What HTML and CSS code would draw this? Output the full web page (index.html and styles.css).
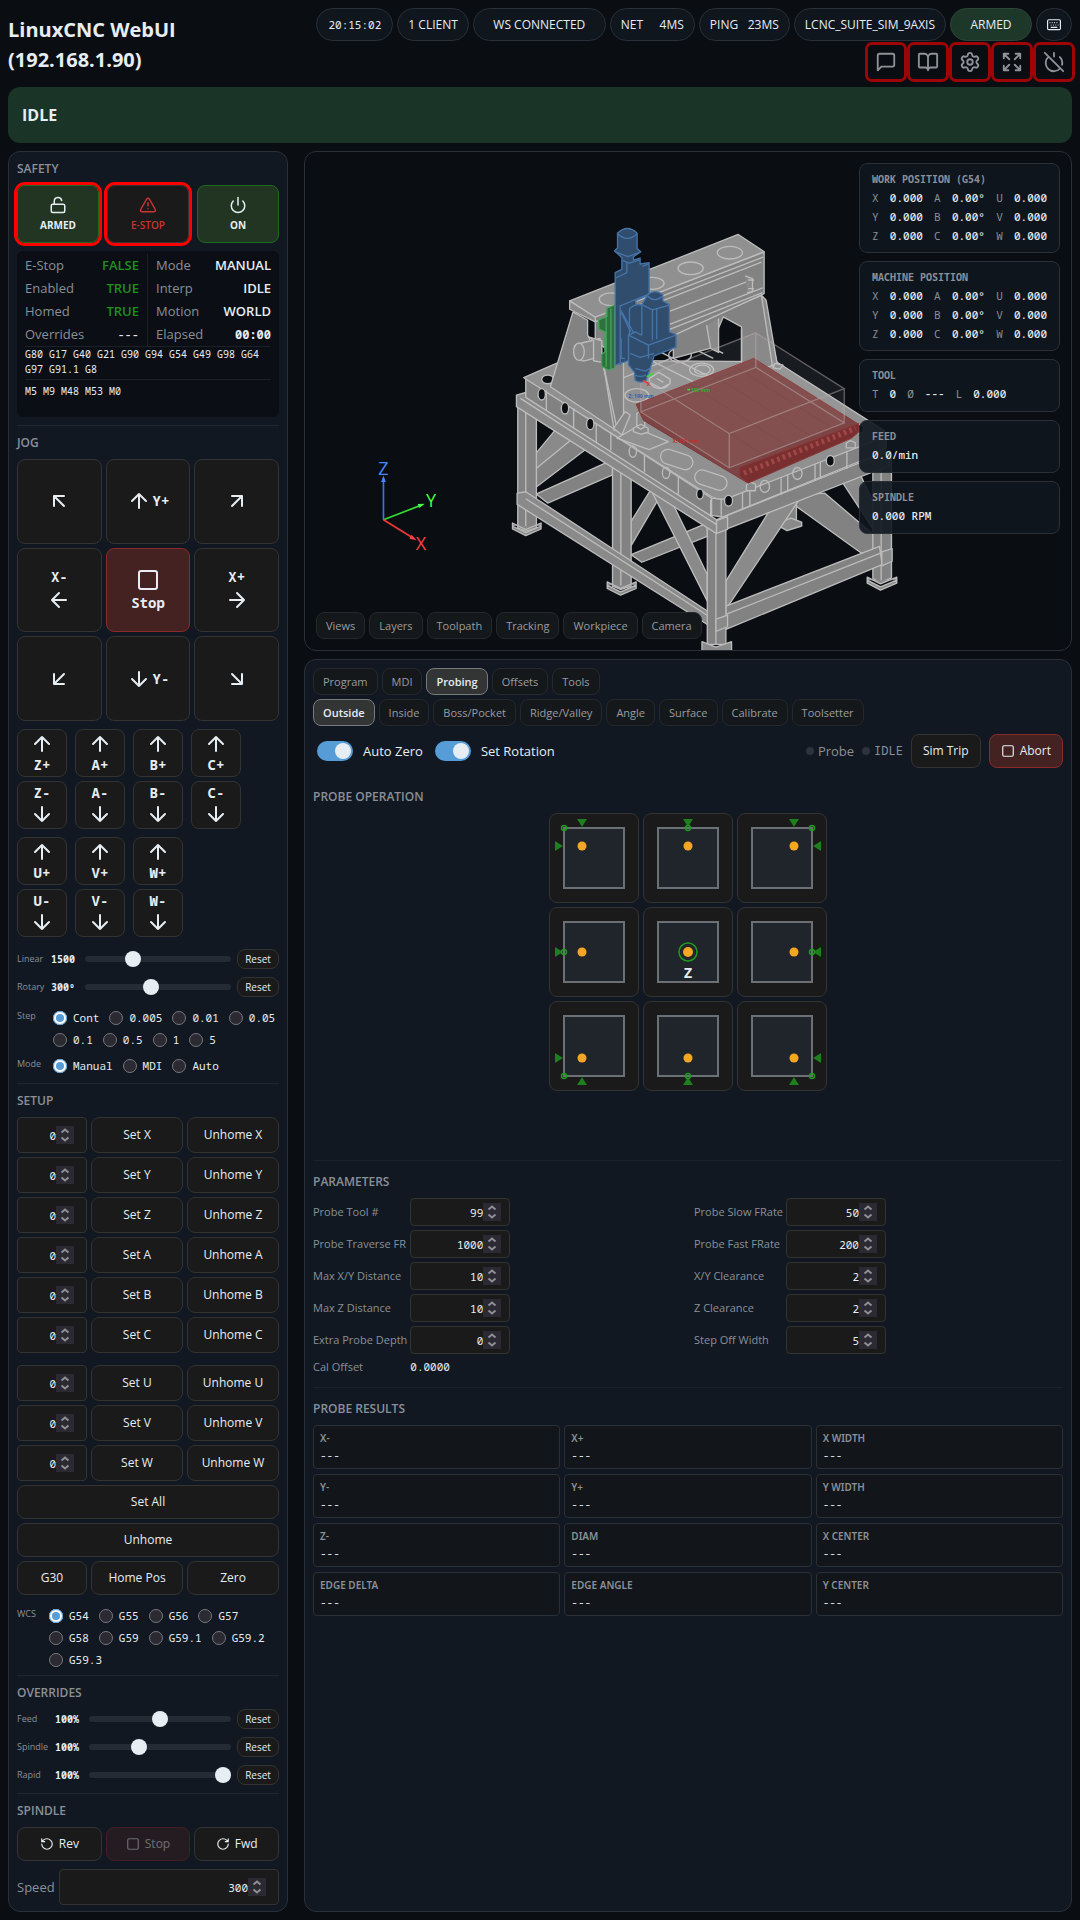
FILE: index.html
```html
<!DOCTYPE html>
<html lang="en">
<head>
<meta charset="utf-8">
<meta name="viewport" content="width=device-width, initial-scale=1">
<title>LinuxCNC WebUI (192.168.1.90)</title>
<link rel="stylesheet" href="styles.css">
</head>
<body>
<svg class="defs" aria-hidden="true">
  <symbol id="spin" viewBox="0 0 18 18"><path d="M5.500 6.500 9 3.500l3.500 3M5.500 11.500l3.500 3 3.500-3"/></symbol>
  <symbol id="up" viewBox="0 0 24 24"><path d="m5 12 7-7 7 7M12 19V5"/></symbol>
  <symbol id="down" viewBox="0 0 24 24"><path d="M12 5v14m7-7-7 7-7-7"/></symbol>
  <symbol id="left" viewBox="0 0 24 24"><path d="m12 19-7-7 7-7M19 12H5"/></symbol>
  <symbol id="right" viewBox="0 0 24 24"><path d="M5 12h14m-7-7 7 7-7 7"/></symbol>
  <symbol id="nw" viewBox="0 0 24 24"><path d="M7 17V7h10M17 17 7 7"/></symbol>
  <symbol id="ne" viewBox="0 0 24 24"><path d="M7 7h10v10M7 17 17 7"/></symbol>
  <symbol id="sw" viewBox="0 0 24 24"><path d="M17 7 7 17M17 17H7V7"/></symbol>
  <symbol id="se" viewBox="0 0 24 24"><path d="m7 7 10 10M17 7v10H7"/></symbol>
  <symbol id="square" viewBox="0 0 24 24"><rect x="3" y="3" width="18" height="18" rx="2"/></symbol>
  <symbol id="part" viewBox="0 0 90 90"><rect class="stock" x="15" y="15" width="60" height="60"/></symbol>
</svg>

<header class="top">
  <h1>LinuxCNC WebUI (192.168.1.90)</h1>
  <div class="top-right">
    <div class="pills">
      <span class="pill clock mono">20:15:02</span>
      <span class="pill">1 CLIENT</span>
      <span class="pill ws">WS CONNECTED</span>
      <span class="pill net"><span>NET</span><span>4MS</span></span>
      <span class="pill ping"><span>PING</span><span>23MS</span></span>
      <span class="pill suite">LCNC_SUITE_SIM_9AXIS</span>
      <span class="pill armed">ARMED</span>
      <button class="pill kbd" aria-label="Keyboard"><svg class="icon s14" viewBox="0 0 24 24"><rect x="1" y="3" width="22" height="17" rx="2"/><path d="M5 8h.01M9 8h.01M13 8h.01M17 8h.01M7 12h.01M11 12h.01M15 12h.01M19 12h.01M7 16h10"/></svg></button>
    </div>
    <div class="tools">
      <button class="tool" aria-label="Messages"><svg class="icon s22" viewBox="0 0 24 24"><path d="M21 15a2 2 0 0 1-2 2H7l-4 4V5a2 2 0 0 1 2-2h14a2 2 0 0 1 2 2z"/></svg></button>
      <button class="tool" aria-label="Manual"><svg class="icon s22" viewBox="0 0 24 24"><path d="M12 7v14M3 18a1 1 0 0 1-1-1V4a1 1 0 0 1 1-1h5a4 4 0 0 1 4 4 4 4 0 0 1 4-4h5a1 1 0 0 1 1 1v13a1 1 0 0 1-1 1h-6a3 3 0 0 0-3 3 3 3 0 0 0-3-3z"/></svg></button>
      <button class="tool" aria-label="Settings"><svg class="icon s22" viewBox="0 0 24 24"><path d="M9.671 4.136a2.340 2.340 0 0 1 4.659 0 2.340 2.340 0 0 0 3.319 1.915 2.340 2.340 0 0 1 2.330 4.033 2.340 2.340 0 0 0 0 3.831 2.340 2.340 0 0 1-2.330 4.033 2.340 2.340 0 0 0-3.319 1.915 2.340 2.340 0 0 1-4.659 0 2.340 2.340 0 0 0-3.320-1.915 2.340 2.340 0 0 1-2.330-4.033 2.340 2.340 0 0 0 0-3.831A2.340 2.340 0 0 1 6.350 6.051a2.340 2.340 0 0 0 3.319-1.915"/><circle cx="12" cy="12" r="3"/></svg></button>
      <button class="tool" aria-label="Full screen"><svg class="icon s22" viewBox="0 0 24 24"><path d="m15 15 6 6M15 9l6-6M21 16v5h-5M21 8V3h-5M3 16v5h5M3 21l6-6M3 8V3h5M9 9 3 3"/></svg></button>
      <button class="tool" aria-label="Shut down"><svg class="icon s22" viewBox="0 0 24 24"><path d="M18.360 6.640A9 9 0 0 1 20.770 15M6.160 6.160a9 9 0 1 0 12.680 12.680M12 2v4M2 2l20 20"/></svg></button>
    </div>
  </div>
</header>

<div class="banner" role="status">IDLE</div>

<div class="layout">
<aside class="panel side">
  <section>
    <h2>SAFETY</h2>
    <div class="safety">
      <button class="safe on flag"><svg class="icon s18" viewBox="0 0 24 24"><rect x="3" y="11" width="18" height="11" rx="2"/><path d="M7 11V7a5 5 0 0 1 9.900-1"/></svg>ARMED</button>
      <button class="safe estop flag"><svg class="icon s18" viewBox="0 0 24 24"><path d="m21.730 18-8-14a2 2 0 0 0-3.480 0l-8 14A2 2 0 0 0 4 21h16a2 2 0 0 0 1.730-3M12 9v4M12 17h.01"/></svg>E-STOP</button>
      <button class="safe on"><svg class="icon s18" viewBox="0 0 24 24"><path d="M12 2v10M18.400 6.600a9 9 0 1 1-12.770.04"/></svg>ON</button>
    </div>
    <div class="status">
      <div class="status-cols">
        <dl>
          <dt>E-Stop</dt><dd class="good">FALSE</dd>
          <dt>Enabled</dt><dd class="good">TRUE</dd>
          <dt>Homed</dt><dd class="good">TRUE</dd>
          <dt>Overrides</dt><dd class="mono light">---</dd>
        </dl>
        <dl>
          <dt>Mode</dt><dd>MANUAL</dd>
          <dt>Interp</dt><dd>IDLE</dd>
          <dt>Motion</dt><dd>WORLD</dd>
          <dt>Elapsed</dt><dd class="mono">00:00</dd>
        </dl>
      </div>
      <p class="codes mono">G80 G17 G40 G21 G90 G94 G54 G49 G98 G64 G97 G91.1 G8</p>
      <p class="codes mcodes mono">M5 M9 M48 M53 M0</p>
    </div>
  </section>

  <section class="jog-section">
    <h2>JOG</h2>
    <div class="jog mono">
      <button aria-label="X- Y+"><svg class="icon s24"><use href="#nw"/></svg></button>
      <button><svg class="icon s24"><use href="#up"/></svg>Y+</button>
      <button aria-label="X+ Y+"><svg class="icon s24"><use href="#ne"/></svg></button>
      <button class="col">X-<svg class="icon s24"><use href="#left"/></svg></button>
      <button class="col stop"><svg class="icon s24"><use href="#square"/></svg>Stop</button>
      <button class="col">X+<svg class="icon s24"><use href="#right"/></svg></button>
      <button aria-label="X- Y-"><svg class="icon s24"><use href="#sw"/></svg></button>
      <button><svg class="icon s24"><use href="#down"/></svg>Y-</button>
      <button aria-label="X+ Y-"><svg class="icon s24"><use href="#se"/></svg></button>
    </div>
    <div class="axes mono">
      <button><svg class="icon s24"><use href="#up"/></svg>Z+</button>
      <button><svg class="icon s24"><use href="#up"/></svg>A+</button>
      <button><svg class="icon s24"><use href="#up"/></svg>B+</button>
      <button><svg class="icon s24"><use href="#up"/></svg>C+</button>
      <button>Z-<svg class="icon s24"><use href="#down"/></svg></button>
      <button>A-<svg class="icon s24"><use href="#down"/></svg></button>
      <button>B-<svg class="icon s24"><use href="#down"/></svg></button>
      <button>C-<svg class="icon s24"><use href="#down"/></svg></button>
    </div>
    <div class="axes three mono">
      <button><svg class="icon s24"><use href="#up"/></svg>U+</button>
      <button><svg class="icon s24"><use href="#up"/></svg>V+</button>
      <button><svg class="icon s24"><use href="#up"/></svg>W+</button>
      <button>U-<svg class="icon s24"><use href="#down"/></svg></button>
      <button>V-<svg class="icon s24"><use href="#down"/></svg></button>
      <button>W-<svg class="icon s24"><use href="#down"/></svg></button>
    </div>
    <div class="sliders jog-sliders">
      <div class="slide"><label for="lin">Linear</label><output class="mono" for="lin">1500</output><input id="lin" type="range" min="0" max="1000" value="308"><button class="reset">Reset</button></div>
      <div class="slide"><label for="rot">Rotary</label><output class="mono" for="rot">300º</output><input id="rot" type="range" min="0" max="1000" value="446"><button class="reset">Reset</button></div>
    </div>
    <div class="choice" role="radiogroup" aria-label="Step">
      <span class="cap">Step</span>
      <div class="opts mono">
        <label><input type="radio" name="step" checked>Cont</label>
        <label><input type="radio" name="step">0.005</label>
        <label><input type="radio" name="step">0.01</label>
        <label><input type="radio" name="step">0.05</label>
        <label><input type="radio" name="step">0.1</label>
        <label><input type="radio" name="step">0.5</label>
        <label><input type="radio" name="step">1</label>
        <label><input type="radio" name="step">5</label>
      </div>
    </div>
    <div class="choice" role="radiogroup" aria-label="Mode">
      <span class="cap">Mode</span>
      <div class="opts mono">
        <label><input type="radio" name="mode" checked>Manual</label>
        <label><input type="radio" name="mode">MDI</label>
        <label><input type="radio" name="mode">Auto</label>
      </div>
    </div>
  </section>

  <section class="setup-section">
    <h2>SETUP</h2>
    <div class="setup">
      <div class="num mono"><input type="number" value="0" aria-label="X value"><svg class="spin"><use href="#spin"/></svg></div><button class="btn">Set X</button><button class="btn">Unhome X</button>
      <div class="num mono"><input type="number" value="0" aria-label="Y value"><svg class="spin"><use href="#spin"/></svg></div><button class="btn">Set Y</button><button class="btn">Unhome Y</button>
      <div class="num mono"><input type="number" value="0" aria-label="Z value"><svg class="spin"><use href="#spin"/></svg></div><button class="btn">Set Z</button><button class="btn">Unhome Z</button>
      <div class="num mono"><input type="number" value="0" aria-label="A value"><svg class="spin"><use href="#spin"/></svg></div><button class="btn">Set A</button><button class="btn">Unhome A</button>
      <div class="num mono"><input type="number" value="0" aria-label="B value"><svg class="spin"><use href="#spin"/></svg></div><button class="btn">Set B</button><button class="btn">Unhome B</button>
      <div class="num mono"><input type="number" value="0" aria-label="C value"><svg class="spin"><use href="#spin"/></svg></div><button class="btn">Set C</button><button class="btn">Unhome C</button>
    </div>
    <div class="setup second">
      <div class="num mono"><input type="number" value="0" aria-label="U value"><svg class="spin"><use href="#spin"/></svg></div><button class="btn">Set U</button><button class="btn">Unhome U</button>
      <div class="num mono"><input type="number" value="0" aria-label="V value"><svg class="spin"><use href="#spin"/></svg></div><button class="btn">Set V</button><button class="btn">Unhome V</button>
      <div class="num mono"><input type="number" value="0" aria-label="W value"><svg class="spin"><use href="#spin"/></svg></div><button class="btn">Set W</button><button class="btn">Unhome W</button>
      <button class="btn wide">Set All</button>
      <button class="btn wide">Unhome</button>
      <button class="btn">G30</button><button class="btn">Home Pos</button><button class="btn">Zero</button>
    </div>
    <div class="choice wcs" role="radiogroup" aria-label="WCS">
      <span class="cap">WCS</span>
      <div class="opts mono">
        <label><input type="radio" name="wcs" checked>G54</label>
        <label><input type="radio" name="wcs">G55</label>
        <label><input type="radio" name="wcs">G56</label>
        <label><input type="radio" name="wcs">G57</label>
        <label><input type="radio" name="wcs">G58</label>
        <label><input type="radio" name="wcs">G59</label>
        <label><input type="radio" name="wcs">G59.1</label>
        <label><input type="radio" name="wcs">G59.2</label>
        <label><input type="radio" name="wcs">G59.3</label>
      </div>
    </div>
  </section>

  <section>
    <h2>OVERRIDES</h2>
    <div class="sliders over">
      <div class="slide"><label for="feed">Feed</label><output class="mono" for="feed">100%</output><input id="feed" type="range" min="0" max="200" value="100"><button class="reset">Reset</button></div>
      <div class="slide"><label for="spd">Spindle</label><output class="mono" for="spd">100%</output><input id="spd" type="range" min="0" max="300" value="100"><button class="reset">Reset</button></div>
      <div class="slide"><label for="rap">Rapid</label><output class="mono" for="rap">100%</output><input id="rap" type="range" min="0" max="100" value="100"><button class="reset">Reset</button></div>
    </div>
  </section>

  <section class="spindle-section">
    <h2>SPINDLE</h2>
    <div class="spindle">
      <button class="btn"><svg class="icon s14" viewBox="0 0 24 24"><path d="M3 12a9 9 0 1 0 9-9 9.750 9.750 0 0 0-6.740 2.740L3 8M3 3v5h5"/></svg>Rev</button>
      <button class="btn danger" disabled><svg class="icon s14"><use href="#square"/></svg>Stop</button>
      <button class="btn"><svg class="icon s14" viewBox="0 0 24 24"><path d="M21 12a9 9 0 1 1-9-9c2.520 0 4.930 1 6.740 2.740L21 8M21 3v5h-5"/></svg>Fwd</button>
    </div>
    <div class="speed"><label for="speed">Speed</label><div class="num mono"><input id="speed" type="number" value="300"><svg class="spin"><use href="#spin"/></svg></div></div>
  </section>
</aside>

<main>
  <section class="view" aria-label="Machine view">
    <svg class="scene" viewBox="12 18 2304 1500" preserveAspectRatio="xMidYMid slice" aria-hidden="true">
      <g class="steel">
        <!-- rear legs and braces -->
        <path class="dk" d="M1455 1060h35v70h-35z"/>
        <path d="M1440 1135l33-15 33 12v12l-44 14-22-12z"/>
        <path class="dk" d="M707 1048 937 945v45l-195 85z"/>
        <path d="M678 960 765 855l55 30-142 125z"/>
        <path class="dk" d="M678 995 812 885l45 28-169 129-10 3z"/>
        <path class="dk" d="M993 1230 1222 1135v40l-197 78z"/>
        <path d="M993 1130 1050 1038l28 20-85 145z"/>
        <path class="dk" d="M1490 1050 1575 1045 1740 1185v32l-55 8-195-140z"/>
        <path d="M1630 1015 1685 995l75 160-5 50z"/>
        <path d="M1055 1040 1115 1070 1222 1290v80z"/>
        <path d="M1278 1310 1420 1080l75-10-217 325z"/>
        <!-- legs -->
        <path class="dk" d="M652 760h56v390l-32 10-24-10z"/><path d="M676 770v385"/>
        <path d="M636 1135l40 20 46-20v18l-46 20-40-20zM636 1144l40 20 46-20"/>
        <path class="dk" d="M937 940h56v385l-32 10-24-10z"/><path d="M962 950v385"/>
        <path d="M921 1312l40 20 47-20v20l-47 20-40-20zM921 1322l40 20 47-20"/>
        <path class="dk" d="M1720 930h56v370l-32 14-24-12z"/><path d="M1745 940v370"/>
        <path d="M1703 1298l40 20 49-20v18l-49 21-40-21zM1703 1307l40 20 49-20"/>
        <!-- lower rails -->
        <path d="M650 1045l26-4 576 378v40l-602-380z"/><path d="M676 1062 1252 1432"/>
        <path class="dk" d="M1278 1385 1740 1205l8 55-470 195z"/><path d="M1278 1410 1745 1225"/>
        <path d="M1747 1222l31-10v38l-31 14z"/>
        <!-- front leg -->
        <path class="dk" d="M1222 1130h56v370h-56z"/><path d="M1248 1160v340"/>
        <path d="M1248 1424l35-12v35l-35 14z"/>
        <path d="M1206 1492l42 16 47-16v30h-89z"/>
        <!-- bed frame -->
        <path d="M648 750l28-8 574 383v42l-602-382z"/><path d="M660 760 1250 1140"/>
        <path class="dk" d="M1250 1125 1770 918v44l-520 203z"/><path d="M1250 1128l33-12v38l-33 12z"/>
        <path class="dk" d="M676 700 1235 1060v55L676 757z"/>
        <path class="dk" d="M1235 1060l30 4 480-190 12 45-490 198-32-5z"/>
        <path d="M1735 855l25 10v45l-25 10"/>
        <path class="lt" d="M670 698 790 645 1430 650 1755 858v18L1285 1060q-25 8-50-4z"/>
        <path d="M738 735v60M820 790v60M888 838v55M932 862v55M1033 932v50M1135 996v55M1232 1065v50M1264 1066v50M1328 1045v50M1350 1036v50M1444 1000v50M1464 990v50M1546 958v50M1562 952v50M1642 922v50"/>
        <!-- deck openings -->
        <g class="hole"><ellipse cx="742" cy="703" rx="18" ry="13"/><ellipse cx="724" cy="748" rx="11" ry="17"/><ellipse cx="794" cy="790" rx="11" ry="17"/><ellipse cx="870" cy="837" rx="11" ry="17"/><ellipse cx="1200" cy="1048" rx="10" ry="15"/><ellipse cx="1286" cy="1068" rx="12" ry="16"/><ellipse cx="1592" cy="948" rx="12" ry="16"/><ellipse cx="1682" cy="852" rx="10" ry="13"/></g>
        <g class="ring"><ellipse cx="998" cy="920" rx="11" ry="17"/><ellipse cx="1098" cy="984" rx="11" ry="17"/><ellipse cx="1395" cy="1025" rx="14" ry="18"/><ellipse cx="1493" cy="986" rx="14" ry="18"/><ellipse cx="1010" cy="751" rx="36" ry="20"/><ellipse cx="1140" cy="630" rx="34" ry="22"/><ellipse cx="1205" cy="674" rx="36" ry="20"/><ellipse cx="1080" cy="712" rx="28" ry="18"/><rect x="1080" y="922" width="100" height="44" rx="22" transform="rotate(18 1130 944)"/><rect x="1183" y="984" width="100" height="44" rx="22" transform="rotate(18 1233 1006)"/><ellipse cx="1207" cy="674" rx="24" ry="14"/></g>
        <path class="ring" d="M950 880l55-32 100 42-58 24zM965 700l220-90M1040 640l300 150M1080 620l300 150M1100 570l140 70M1140 560l130 65"/>
        <!-- gantry -->
        <path class="dk" d="M1120 560 1385 450 1432 655 1325 700 1325 545 1270 515 1230 610 1120 640z"/>
        <path d="M1385 450l14 15 33 190-14 8zM1220 540l12 70 24 12V520M1325 550v100"/>
        <path d="M1425 655l25 5-10 12-20-4z"/>
        <path class="dk" d="M885 515 1393 320v125L960 645l-75-60z"/>
        <path class="lt" d="M808 467 1315 267l78 52-508 197z"/>
        <path d="M808 467l77 49v14l-77-38zM885 530 1390 335M900 540 1385 350M1000 540 1340 410M1090 545 1388 428M1090 560 1388 442"/>
        <path d="M1336 392l22 8v38l-16 5M1345 404h18M1345 430h18"/>
        <path class="dk" d="M818 500l44 25v45l48 95 38 180-10 5-188-125z"/>
        <path class="dk" d="M910 660l60-10v195l-28 12z"/><path d="M910 660l40 190"/>
        <path d="M940 850l35-50 15 10-25 60z"/>
        <path d="M822 605q6-12 16-10l62-15v55l-48 12q-12 2-17-5-14-12-13-37z"/><ellipse cx="836" cy="620" rx="16" ry="26"/>
        <path d="M865 575l40 12v65l-25-5v-60z"/>
        <g class="ring"><ellipse cx="932" cy="462" rx="35" ry="19"/><ellipse cx="1056" cy="414" rx="36" ry="18"/><ellipse cx="1172" cy="369" rx="38" ry="19"/><ellipse cx="1290" cy="322" rx="38" ry="19"/></g>
        <path d="M1010 805q12-15 24 0v40l-12 8-12-8zM1000 850l22-12 22 12v12l-22 6-22-8z"/>
        <path class="lt" d="M1048 700l28-18 34 20v14l-28 14-34-18zM1070 700l20 12"/>
        <path d="M1340 1020l12-8 15 6v20h-27zM1640 895l12-8 15 6v16h-27z"/>
      </g>
      <!-- table -->
      <g class="table">
        <path d="M1008 778 1362 640 1677 838 1322 975 1345 1015 1030 826z"/>
        <path class="table-side" d="M1320 968 1677 836v26l-22 18-310 135-25-20z"/>
        <path class="slots" d="M1332 985 1668 850"/>
        <path class="lines" d="M1012 800 1362 655M1030 826l300 180M1100 745l298 190M1170 718l300 190M1240 690l300 188M1305 664l300 190"/>
      </g>
      <!-- workpiece bounds -->
      <g class="box">
        <path d="M1368 563 1634 731 1634 834 1288 969 1022 801 1022 698z"/>
        <path class="edge" d="M1368 563 1634 731 1288 866 1022 698zM1368 667 1634 834 1288 969 1022 801zM1368 563v104M1634 731v103M1288 866v103M1022 698v103"/>
      </g>
      <!-- saddle -->
      <path class="green" d="M895 524l25-10v-25l24-10v190l-20 6-20-12v-35l10-8v-60l-18-8zM932 490v180M918 500v165"/>
      <!-- spindle head -->
      <g class="blue">
        <path d="M943 316l9-8v-45q30-28 59 0v46l11 10-22 15v10l20-6v18l27-4v96l-40 18v140l-20 40-42 14V382l20-10v-35z"/>
        <path d="M952 265q30 28 59 0M943 318l40 16 38-14M967 345l20 8 33-10M980 350v32l-33 16M1047 355l-20 8M960 482l85-35M960 480v180"/>
        <path d="M988 490q28-24 56 0v90h-56z"/>
        <path class="blue-lt" d="M1025 478l18-30q22-18 45 0v18l20 12v82l20 8v38l-66 26-12 40-12 34q-16 10-33 0l-2-24-18-22V570l20-10 20 10z"/>
        <path d="M1042 452q22 22 46 0M1025 478l32 16 50-14M1057 494v92M1070 492v90M985 570l60 30 83-30M1045 600v40M990 625l30 12 42-12M1005 670l30 8 15-8M962 500l30 60M962 495l40 70M1005 690q16 8 33 0M975 640h-12v-60"/>
      </g>
      <g class="marks">
        <path class="my" d="M1040 695l20-10M1162 734h8"/><path class="mx" d="M1028 706l14 8"/>
        <text class="tx red" x="1040" y="724">X</text>
        <text class="tx blu" x="985" y="758">Z: 190 mm</text>
        <text class="tx grn" x="1172" y="740">150 mm</text>
        <text class="tx red" x="1118" y="894">X: 597 mm</text>
      </g>
      <g class="gizmo">
        <path class="gz" d="M248 1125V1000"/><path class="gzf" d="M248 992l-7 20h14z"/>
        <path class="gy" d="M248 1125 360 1082"/><path class="gyf" d="M372 1077l-21 1 5 12z"/>
        <path class="gx" d="M248 1125 338 1181"/><path class="gxf" d="M347 1187l-21-5 7-12z"/>
        <text class="blu" x="248" y="990">Z</text><text class="grn" x="391" y="1088">Y</text><text class="red" x="361" y="1217">X</text>
      </g>
    </svg>
    <div class="readouts mono">
      <div class="card"><h3>WORK POSITION (G54)</h3>
        <div class="dro"><i>X</i><b>0.000</b><i>A</i><b>0.00°</b><i>U</i><b>0.000</b><i>Y</i><b>0.000</b><i>B</i><b>0.00°</b><i>V</i><b>0.000</b><i>Z</i><b>0.000</b><i>C</i><b>0.00°</b><i>W</i><b>0.000</b></div></div>
      <div class="card"><h3>MACHINE POSITION</h3>
        <div class="dro"><i>X</i><b>0.000</b><i>A</i><b>0.00°</b><i>U</i><b>0.000</b><i>Y</i><b>0.000</b><i>B</i><b>0.00°</b><i>V</i><b>0.000</b><i>Z</i><b>0.000</b><i>C</i><b>0.00°</b><i>W</i><b>0.000</b></div></div>
      <div class="card short"><h3>TOOL</h3><div class="line"><i>T</i><b>0</b><i>Ø</i><b>---</b><i>L</i><b>0.000</b></div></div>
      <div class="card short"><h3>FEED</h3><div class="line"><b>0.0/min</b></div></div>
      <div class="card short"><h3>SPINDLE</h3><div class="line"><b>0.000 RPM</b></div></div>
    </div>
    <div class="tabs view-menu">
      <button class="tab">Views</button><button class="tab">Layers</button><button class="tab">Toolpath</button><button class="tab">Tracking</button><button class="tab">Workpiece</button><button class="tab">Camera</button>
    </div>
  </section>

  <section class="panel work">
    <nav class="tabs" aria-label="Sections">
      <button class="tab">Program</button><button class="tab">MDI</button><button class="tab active">Probing</button><button class="tab">Offsets</button><button class="tab">Tools</button>
    </nav>
    <nav class="tabs" aria-label="Probe routines">
      <button class="tab active">Outside</button><button class="tab">Inside</button><button class="tab">Boss/Pocket</button><button class="tab">Ridge/Valley</button><button class="tab">Angle</button><button class="tab">Surface</button><button class="tab">Calibrate</button><button class="tab">Toolsetter</button>
    </nav>
    <div class="bar">
      <label class="switch"><input type="checkbox" checked>Auto Zero</label>
      <label class="switch"><input type="checkbox" checked>Set Rotation</label>
      <span class="led push">Probe</span>
      <span class="led mono">IDLE</span>
      <button class="btn sim">Sim Trip</button>
      <button class="btn danger abort"><svg class="icon s14"><use href="#square"/></svg>Abort</button>
    </div>

    <h2 class="probe-title">PROBE OPERATION</h2>
    <div class="probe">
      <button aria-label="Corner back left"><svg viewBox="0 0 90 90"><use href="#part"/><path class="tri" d="M28 6h10l-5 8zM6 28v10l8-5z"/><circle class="pt" cx="15" cy="15" r="2.500"/><circle class="dot" cx="33" cy="33" r="4.500"/></svg></button>
      <button aria-label="Edge back"><svg viewBox="0 0 90 90"><use href="#part"/><path class="tri" d="M40 6h10l-5 8z"/><circle class="pt" cx="45" cy="15" r="2.500"/><circle class="dot" cx="45" cy="33" r="4.500"/></svg></button>
      <button aria-label="Corner back right"><svg viewBox="0 0 90 90"><use href="#part"/><path class="tri" d="M52 6h10l-5 8zM84 28v10l-8-5z"/><circle class="pt" cx="75" cy="15" r="2.500"/><circle class="dot" cx="57" cy="33" r="4.500"/></svg></button>
      <button aria-label="Edge left"><svg viewBox="0 0 90 90"><use href="#part"/><path class="tri" d="M6 40v10l8-5z"/><circle class="pt" cx="15" cy="45" r="2.500"/><circle class="dot" cx="33" cy="45" r="4.500"/></svg></button>
      <button><svg viewBox="0 0 90 90"><use href="#part"/><circle class="pt" cx="45" cy="45" r="9"/><circle class="dot" cx="45" cy="45" r="5"/><text x="45" y="71">Z</text></svg></button>
      <button aria-label="Edge right"><svg viewBox="0 0 90 90"><use href="#part"/><path class="tri" d="M84 40v10l-8-5z"/><circle class="pt" cx="75" cy="45" r="2.500"/><circle class="dot" cx="57" cy="45" r="4.500"/></svg></button>
      <button aria-label="Corner front left"><svg viewBox="0 0 90 90"><use href="#part"/><path class="tri" d="M28 84h10l-5-8zM6 52v10l8-5z"/><circle class="pt" cx="15" cy="75" r="2.500"/><circle class="dot" cx="33" cy="57" r="4.500"/></svg></button>
      <button aria-label="Edge front"><svg viewBox="0 0 90 90"><use href="#part"/><path class="tri" d="M40 84h10l-5-8z"/><circle class="pt" cx="45" cy="75" r="2.500"/><circle class="dot" cx="45" cy="57" r="4.500"/></svg></button>
      <button aria-label="Corner front right"><svg viewBox="0 0 90 90"><use href="#part"/><path class="tri" d="M52 84h10l-5-8zM84 52v10l-8-5z"/><circle class="pt" cx="75" cy="75" r="2.500"/><circle class="dot" cx="57" cy="57" r="4.500"/></svg></button>
    </div>

    <div class="block">
      <h2>PARAMETERS</h2>
      <div class="params">
        <div class="fields">
          <label for="p1">Probe Tool #</label><div class="num mono"><input id="p1" type="number" value="99"><svg class="spin"><use href="#spin"/></svg></div>
          <label for="p2">Probe Traverse FR</label><div class="num mono"><input id="p2" type="number" value="1000"><svg class="spin"><use href="#spin"/></svg></div>
          <label for="p3">Max X/Y Distance</label><div class="num mono"><input id="p3" type="number" value="10"><svg class="spin"><use href="#spin"/></svg></div>
          <label for="p4">Max Z Distance</label><div class="num mono"><input id="p4" type="number" value="10"><svg class="spin"><use href="#spin"/></svg></div>
          <label for="p5">Extra Probe Depth</label><div class="num mono"><input id="p5" type="number" value="0"><svg class="spin"><use href="#spin"/></svg></div>
          <label for="p6">Cal Offset</label><output id="p6" class="mono">0.0000</output>
        </div>
        <div class="fields">
          <label for="q1">Probe Slow FRate</label><div class="num mono"><input id="q1" type="number" value="50"><svg class="spin"><use href="#spin"/></svg></div>
          <label for="q2">Probe Fast FRate</label><div class="num mono"><input id="q2" type="number" value="200"><svg class="spin"><use href="#spin"/></svg></div>
          <label for="q3">X/Y Clearance</label><div class="num mono"><input id="q3" type="number" value="2"><svg class="spin"><use href="#spin"/></svg></div>
          <label for="q4">Z Clearance</label><div class="num mono"><input id="q4" type="number" value="2"><svg class="spin"><use href="#spin"/></svg></div>
          <label for="q5">Step Off Width</label><div class="num mono"><input id="q5" type="number" value="5"><svg class="spin"><use href="#spin"/></svg></div>
        </div>
      </div>
    </div>

    <div class="block">
      <h2>PROBE RESULTS</h2>
      <dl class="results">
        <div><dt>X-</dt><dd class="mono">---</dd></div><div><dt>X+</dt><dd class="mono">---</dd></div><div><dt>X WIDTH</dt><dd class="mono">---</dd></div>
        <div><dt>Y-</dt><dd class="mono">---</dd></div><div><dt>Y+</dt><dd class="mono">---</dd></div><div><dt>Y WIDTH</dt><dd class="mono">---</dd></div>
        <div><dt>Z-</dt><dd class="mono">---</dd></div><div><dt>DIAM</dt><dd class="mono">---</dd></div><div><dt>X CENTER</dt><dd class="mono">---</dd></div>
        <div><dt>EDGE DELTA</dt><dd class="mono">---</dd></div><div><dt>EDGE ANGLE</dt><dd class="mono">---</dd></div><div><dt>Y CENTER</dt><dd class="mono">---</dd></div>
      </dl>
    </div>
  </section>
</main>
</div>
</body>
</html>
```
FILE: styles.css
```css
:root {
  --bg: #0a0d12;
  --panel: #111821;
  --line: #2a3038;
  --btn: #1a1a1a;
  --btn-line: #333333;
  --text: #e6edf3;
  --muted: #8a9098;
  --accent: #569cd6;
  --good: #1f8f1f;
}
* { box-sizing: border-box; margin: 0; }
body {
  background: var(--bg);
  color: var(--text);
  font: 12px/18px "Open Sans", "Noto Sans", sans-serif;
  min-height: 100vh;
  padding: 8px;
  display: flex;
  flex-direction: column;
  gap: 8px;
}
button, input { font: inherit; color: inherit; }
button {
  background: var(--btn);
  border: 1px solid var(--btn-line);
  border-radius: 8px;
  padding: 0;
  display: flex;
  align-items: center;
  justify-content: center;
}
.mono { font-family: "Noto Sans Mono", "DejaVu Sans Mono", monospace; }
.defs { position: absolute; width: 0; height: 0; }
.icon { fill: none; stroke: currentColor; stroke-width: 2; stroke-linecap: round; stroke-linejoin: round; flex: none; }
.s14 { width: 14px; height: 14px; }
.s18 { width: 18px; height: 18px; }
.s22 { width: 22px; height: 22px; }
.s24 { width: 24px; height: 24px; }

/* header */
.top { display: flex; justify-content: space-between; align-items: center; }
.top h1 { font-size: 20px; line-height: 30px; font-weight: 700; max-width: 240px; padding-top: 2px; }
.top-right { display: flex; flex-direction: column; align-items: flex-end; gap: 4px; }
.pills { display: flex; gap: 4px; }
.pill {
  height: 33px;
  padding: 0 10px;
  border: 1px solid var(--line);
  border-radius: 17px;
  background: #0f161e;
  display: flex;
  align-items: center;
  justify-content: center;
  white-space: nowrap;
}
.clock { font-size: 11px; min-width: 77px; }
.ws { min-width: 133px; }
.net { min-width: 85px; justify-content: space-between; }
.ping { min-width: 91px; justify-content: space-between; }
.suite { min-width: 152px; }
.armed { min-width: 82px; background: #1d3829; border-color: #2b4538; }
.kbd { width: 36px; padding: 0; }
.tools { display: flex; gap: 6px; }
.tool { width: 36px; height: 34px; background: transparent; border: 0; border-radius: 4px; outline: 3px solid #ff0000; opacity: .6; }
.banner {
  background: #1a3427;
  border-radius: 12px;
  padding: 16px 14px;
  font-size: 16px;
  line-height: 24px;
  font-weight: 700;
}

/* page frame */
.layout { flex: 1; display: grid; grid-template-columns: 280px minmax(0, 1fr); gap: 16px; }
.panel { background: var(--panel); border: 1px solid var(--line); border-radius: 12px; padding: 8px; }
main { display: flex; flex-direction: column; gap: 8px; }
h2 { font-size: 12px; line-height: 17px; font-weight: 600; color: var(--muted); margin-bottom: 8px; }
.side { padding-bottom: 6px; }
.side section { padding-bottom: 8px; }
.side section + section { border-top: 1px solid #1f262e; padding-top: 8px; }
.side .jog-section { padding-bottom: 6px; }
.side .setup-section { padding-bottom: 4px; }
.side .spindle-section { padding-bottom: 0; }

/* safety */
.safety { display: grid; grid-template-columns: repeat(3, 1fr); gap: 8px; }
.safe { height: 58px; flex-direction: column; gap: 4px; font-size: 10px; line-height: 14px; font-weight: 700; }
.safe.on { background: #223522; border-color: #1d6b1d; }
.safe.estop { color: #cc3333; font-weight: 600; }
.flag { outline: 3px solid #ff0000; }
.status { margin-top: 8px; background: #0b0e15; border-radius: 6px; padding: 3px 8px 0; height: 166px; }
.status-cols { display: grid; grid-template-columns: 1fr 1fr; }
.status dl { display: grid; grid-template-columns: auto 1fr; font-size: 13px; line-height: 23px; }
.status dl:first-child { padding-right: 8px; border-right: 1px solid #1c2128; }
.status dl:last-child { padding-left: 8px; }
.status dt { color: var(--muted); }
.status dd { text-align: right; font-weight: 600; }
.status dd.mono { font-size: 12px; font-weight: 700; }
.status dd.light { font-weight: 400; }
.status .good { color: var(--good); }
.codes { font-size: 10px; line-height: 15px; border-top: 1px solid #1c2128; padding-bottom: 2px; }
.mcodes { padding-top: 4px; }

/* jog */
.jog { display: grid; grid-template-columns: repeat(3, 1fr); gap: 4px; font-size: 14px; font-weight: 700; }
.jog button { aspect-ratio: 1; gap: 2px; }
.jog .col { flex-direction: column; }
.jog .stop, .danger { background: #442222; border-color: #8a2a2a; }
.axes { display: grid; grid-template-columns: repeat(4, 50px); gap: 4px 8px; margin-top: 8px; font-size: 14px; font-weight: 700; }
.axes.three { grid-template-columns: repeat(3, 50px); }
.axes button { height: 48px; flex-direction: column; }
.sliders { display: grid; gap: 8px; }
.jog-sliders { margin-top: 12px; }
.slide { display: grid; grid-template-columns: 34px 34px 1fr 42px; align-items: center; height: 20px; }
.over .slide { grid-template-columns: 38px 34px 1fr 42px; }
.slide label, .cap { font-size: 9px; color: var(--muted); }
.slide output { font-size: 10px; font-weight: 700; }
.reset { height: 20px; font-size: 10px; line-height: 14px; }
input[type="range"] { appearance: none; background: transparent; width: 100%; height: 16px; padding-right: 6px; }
input[type="range"]::-webkit-slider-runnable-track { height: 6px; border-radius: 3px; background: #242b34; }
input[type="range"]::-webkit-slider-thumb { appearance: none; width: 16px; height: 16px; margin-top: -5px; border-radius: 50%; background: var(--text); }
.choice { display: grid; grid-template-columns: 36px 1fr; margin-top: 4px; }
.jog-sliders + .choice { margin-top: 10px; }
.opts { display: flex; flex-wrap: wrap; column-gap: 10px; font-size: 11px; }
.opts label { display: flex; align-items: center; gap: 6px; height: 22px; }
input[type="radio"] { appearance: none; width: 14px; height: 14px; margin: 0; border-radius: 50%; border: 1px solid #77767c; background: #2b2a33; }
input[type="radio"]:checked { border: 3px solid #ffffff; background: var(--accent); outline: 1px solid var(--accent); outline-offset: -1px; }

/* setup */
.btn { font-size: 12px; line-height: 18px; gap: 5px; height: 34px; }
.setup { display: grid; grid-template-columns: 70px 1fr 1fr; gap: 4px; }
.setup.second { margin-top: 12px; }
.setup .num { height: 36px; }
.setup .num ~ .btn { height: auto; min-height: 34px; }
.setup .wide { grid-column: 1 / -1; }
.num { display: flex; align-items: center; min-width: 0; background: var(--btn); border: 1px solid var(--btn-line); border-radius: 4px; padding-right: 12px; font-size: 11px; }
.num input { flex: 1; min-width: 0; width: 0; height: 100%; border: 0; padding: 0; background: transparent; text-align: right; appearance: textfield; }
.num input::-webkit-inner-spin-button { appearance: none; margin: 0; }
.spin { width: 18px; height: 18px; flex: none; background: #2b2a33; fill: none; stroke: #8f8f99; stroke-width: 2; }
.wcs { grid-template-columns: 32px 1fr; margin-top: 10px; }
.spindle { display: grid; grid-template-columns: repeat(3, 1fr); gap: 4px; }
.spindle .danger { opacity: .4; }
.speed { display: flex; align-items: center; gap: 4px; margin-top: 8px; font-size: 13px; color: var(--muted); }
.speed .num { flex: 1; height: 36px; color: var(--text); }

/* machine view */
.view { position: relative; height: 500px; border: 1px solid var(--line); border-radius: 12px; overflow: hidden; padding: 11px; display: flex; flex-direction: column; justify-content: space-between; align-items: flex-end; }
.scene { position: absolute; inset: 0; width: 100%; height: 100%; }
.readouts { position: relative; width: 201px; display: grid; gap: 8px; }
.card { background: rgba(15, 22, 31, .9); border: 1px solid var(--line); border-radius: 8px; padding: 6px 12px 7px; font-size: 11px; line-height: 19px; }
.card.short { padding-bottom: 8px; }
.card h3 { font-size: 10px; line-height: 18px; font-weight: 700; color: var(--muted); }
.card i { font-style: normal; color: var(--muted); }
.card b { font-weight: 500; }
.dro { display: grid; grid-template-columns: repeat(6, auto); justify-content: space-between; }
.line { display: flex; gap: 11px; }
.tabs { display: flex; gap: 4px; }
.view-menu { position: relative; align-self: flex-start; }
.tab { height: 27px; padding: 0 9px; font-size: 11px; color: #999c9f; background: #15181b; border-color: #25292d; }
.tab.active { color: var(--text); background: #333535; border-color: #777a7c; font-weight: 600; }

.steel path, .steel rect, .steel ellipse { fill: #8a8a8a; stroke: #bcbcbc; stroke-width: 4; stroke-linejoin: round; }
.steel .dk { fill: #828282; }
.steel .lt { fill: #909090; }
.steel .ring ellipse, .steel .ring rect, .steel path.ring { fill: none; }
.steel .hole ellipse { fill: #0b0e13; }
.table path { fill: #7c4444; stroke: #8a3636; stroke-width: 3; }
.table .table-side { fill: #792f2f; }
.table .slots { fill: none; stroke: #a04848; stroke-width: 16; stroke-dasharray: 8 10; }
.table .lines { fill: none; stroke: #744040; stroke-width: 2; }
.box path { fill: rgba(255, 255, 255, .06); }
.box .edge { fill: none; stroke: #b9aaaa; stroke-width: 4; opacity: .5; }
.green { fill: #2f7040; stroke: #47a35a; stroke-width: 4; }
.blue path { fill: #304d6e; stroke: #4674a8; stroke-width: 4; stroke-linejoin: round; }
.blue path:nth-child(2), .blue path:last-child { fill: none; }
.gizmo { font-family: "Open Sans", sans-serif; font-size: 54px; text-anchor: middle; }
.gizmo path { stroke-width: 5; }
.gz { stroke: #3b74dd; }
.gzf, .blu { fill: #4488ff; }
.gy, .my { stroke: #33dd33; }
.gyf, .grn { fill: #44ff44; }
.gx, .mx { stroke: #ee3838; }
.gxf, .red { fill: #ff4040; }
.marks path { stroke-width: 5; }
.tx { font: 700 15px "Open Sans", sans-serif; }
.tx.blu { fill: #3564a8; }
.tx.grn { fill: #34aa34; }
.tx.red { fill: #c03030; }

/* probing */
.work { flex: 1; }
.work .tabs + .tabs { margin-top: 4px; }
.bar { display: flex; align-items: center; gap: 8px; margin-top: 8px; height: 34px; }
.switch { display: flex; align-items: center; gap: 10px; font-size: 13px; margin-left: 4px; }
input[type="checkbox"] { appearance: none; width: 36px; height: 20px; margin: 0; border-radius: 10px; background: var(--accent); display: flex; justify-content: flex-end; padding: 2px; }
input[type="checkbox"]::after { content: ""; width: 16px; height: 16px; border-radius: 50%; background: var(--text); }
.led { display: flex; align-items: center; gap: 4px; font-size: 12px; color: var(--muted); }
.led.push { margin-left: auto; font-size: 13px; }
.led::before { content: ""; width: 8px; height: 8px; border-radius: 50%; background: #2d333c; }
.sim, .abort { padding: 0 11px; }
.probe-title { margin-top: 20px; }
.probe { display: grid; grid-template-columns: repeat(3, 90px); gap: 4px; justify-content: center; padding-bottom: 69px; }
.probe button { height: 90px; }
.probe svg { width: 90px; height: 90px; flex: none; }
.probe text { fill: var(--text); font-weight: 700; font-size: 14px; text-anchor: middle; }
.stock { fill: #20242b; stroke: #6b7075; stroke-width: 2; }
.tri { fill: #1d7f1d; }
.pt { fill: none; stroke: #1f9a1f; stroke-width: 1.5; }
.dot { fill: #f5a623; }
.block { border-top: 1px solid #1a222b; padding: 12px 0 11px; }
.params { display: grid; grid-template-columns: 1fr 1fr; gap: 12px; }
.fields { display: grid; grid-template-columns: max-content 100px; gap: 4px 3px; align-content: start; align-items: center; font-size: 11px; }
.fields label { color: var(--muted); }
.fields .num { height: 28px; padding-right: 8px; }
.results { display: grid; grid-template-columns: repeat(3, 1fr); gap: 5px 4px; }
.results div { border: 1px solid var(--line); border-radius: 4px; background: #121519; padding: 5px 6px; height: 44px; }
.results dt { font: 600 10px/15px "Noto Sans", sans-serif; color: var(--muted); }
.results dd { font-size: 11px; line-height: 18px; }
```
